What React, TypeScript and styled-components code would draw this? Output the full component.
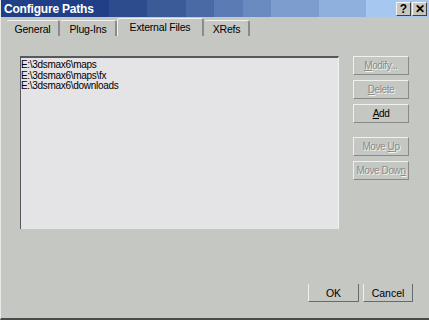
import { createGlobalStyle } from "styled-components";
import styled from "styled-components";

const Global = createGlobalStyle`
    html, body {
        margin: 0;
        padding: 0;
        background: #c5c7c3;
    }
`;

const Window = styled.div`
    width: 429px;
    height: 320px;
    box-sizing: border-box;
    background: #c5c7c3;
    border-left: 1px solid #e8e8e6;
    border-bottom: 2px solid #4a4a4a;
    display: flex;
    flex-direction: column;
    font-family: "Liberation Sans", Arial, sans-serif;
    font-size: 11px;
    color: #000;
    overflow: hidden;
`;

const TitleBar = styled.div`
    height: 17px;
    flex: none;
    display: flex;
    align-items: center;
    padding: 0 2px 0 3px;
    background: linear-gradient(
        to right,
        #213f86 0 108px,
        #2d4c8e 108px 146px,
        #3a5a98 146px 185px,
        #4a6aa6 185px 213px,
        #5a7bb3 213px 242px,
        #6a8bc0 242px 270px,
        #7c9dcd 270px 318px,
        #8fb0dc 318px 365px,
        #a6c8f0 365px 100%
    );
`;

const Title = styled.span`
    color: #ffffff;
    font-weight: bold;
    font-size: 12px;
    flex: 1;
    letter-spacing: -0.2px;
`;

const CapButton = styled.div`
    width: 15px;
    height: 14px;
    box-sizing: border-box;
    background: #c5c7c3;
    border: 1px solid;
    border-color: #f4f4f4 #404040 #404040 #f4f4f4;
    display: flex;
    align-items: center;
    justify-content: center;
    font-weight: bold;
    font-size: 12px;
    line-height: 1;
    margin-left: 1px;
`;

const TabStrip = styled.div`
    height: 19px;
    flex: none;
    display: flex;
    align-items: flex-end;
    padding-left: 5px;
`;

const Tab = styled.div<{ $w: number; $active?: boolean }>`
    width: ${({ $w }) => $w}px;
    height: ${({ $active }) => ($active ? 18 : 16)}px;
    box-sizing: border-box;
    border-top: 1px solid #f0f0ee;
    border-left: 1px solid ${({ $active }) => ($active ? "#f0f0ee" : "#c5c7c3")};
    border-right: 2px solid #8a8a88;
    border-radius: 3px 3px 0 0;
    display: flex;
    align-items: center;
    justify-content: center;
    font-size: 10.5px;
    letter-spacing: -0.2px;
    padding-bottom: ${({ $active }) => ($active ? 2 : 0)}px;
`;

const Body = styled.div`
    flex: none;
    display: flex;
    padding: 20px 0 0 19px;
    gap: 14px;
`;

const ListBox = styled.div`
    width: 319px;
    height: 173px;
    box-sizing: border-box;
    background: #e4e3e6;
    border-top: 2px solid #58585c;
    border-left: 1px solid #58585c;
    border-right: 1px solid #f2f2f2;
    padding: 2px 0 0 0;
    display: flex;
    flex-direction: column;
`;

const ListItem = styled.div`
    height: 10.5px;
    line-height: 10.5px;
    font-size: 10px;
    letter-spacing: -0.3px;
    white-space: nowrap;
`;

const Side = styled.div`
    display: flex;
    flex-direction: column;
    gap: 5px;
`;

const Btn = styled.div<{ $disabled?: boolean; $gapTop?: number }>`
    width: 56px;
    height: 19px;
    box-sizing: border-box;
    border: 1px solid;
    border-color: #f0f0ee #8a8a88 #8a8a88 #f0f0ee;
    display: flex;
    align-items: center;
    justify-content: center;
    font-size: 10px;
    letter-spacing: -0.4px;
    white-space: nowrap;
    overflow: hidden;
    margin-top: ${({ $gapTop }) => $gapTop ?? 0}px;
    color: ${({ $disabled }) => ($disabled ? "#8a8a88" : "#000")};
    text-shadow: ${({ $disabled }) => ($disabled ? "1px 1px 0 #f4f4f4" : "none")};
`;

const BtnLabel = styled.span`
    white-space: pre;
`;

const Footer = styled.div`
    flex: none;
    display: flex;
    justify-content: flex-end;
    gap: 4px;
    padding: 55px 16px 0 0;
`;

const FootBtn = styled.div<{ $w: number }>`
    width: ${({ $w }) => $w}px;
    height: 18px;
    box-sizing: border-box;
    border-left: 1px solid #f0f0ee;
    border-bottom: 1px solid #6a6a6a;
    border-right: 1px solid #6a6a6a;
    display: flex;
    align-items: center;
    justify-content: center;
    font-size: 10.5px;
`;

export default function App() {
    return (
        <>
            <Global />
            <Window>
                <TitleBar>
                    <Title>Configure Paths</Title>
                    <CapButton>?</CapButton>
                    <CapButton>✕</CapButton>
                </TitleBar>
                <TabStrip>
                    <Tab $w={54}>General</Tab>
                    <Tab $w={57}>Plug-Ins</Tab>
                    <Tab $w={87} $active>External Files</Tab>
                    <Tab $w={46}>XRefs</Tab>
                </TabStrip>
                <Body>
                    <ListBox>
                        <ListItem>E:\3dsmax6\maps</ListItem>
                        <ListItem>E:\3dsmax6\maps\fx</ListItem>
                        <ListItem>E:\3dsmax6\downloads</ListItem>
                    </ListBox>
                    <Side>
                        <Btn $disabled><BtnLabel><u>M</u>odify...</BtnLabel></Btn>
                        <Btn $disabled><BtnLabel><u>D</u>elete</BtnLabel></Btn>
                        <Btn><BtnLabel><u>A</u>dd</BtnLabel></Btn>
                        <Btn $disabled $gapTop={9}><BtnLabel>Move <u>U</u>p</BtnLabel></Btn>
                        <Btn $disabled><BtnLabel>Move Dow<u>n</u></BtnLabel></Btn>
                    </Side>
                </Body>
                <Footer>
                    <FootBtn $w={51}>OK</FootBtn>
                    <FootBtn $w={50}>Cancel</FootBtn>
                </Footer>
            </Window>
        </>
    );
}
